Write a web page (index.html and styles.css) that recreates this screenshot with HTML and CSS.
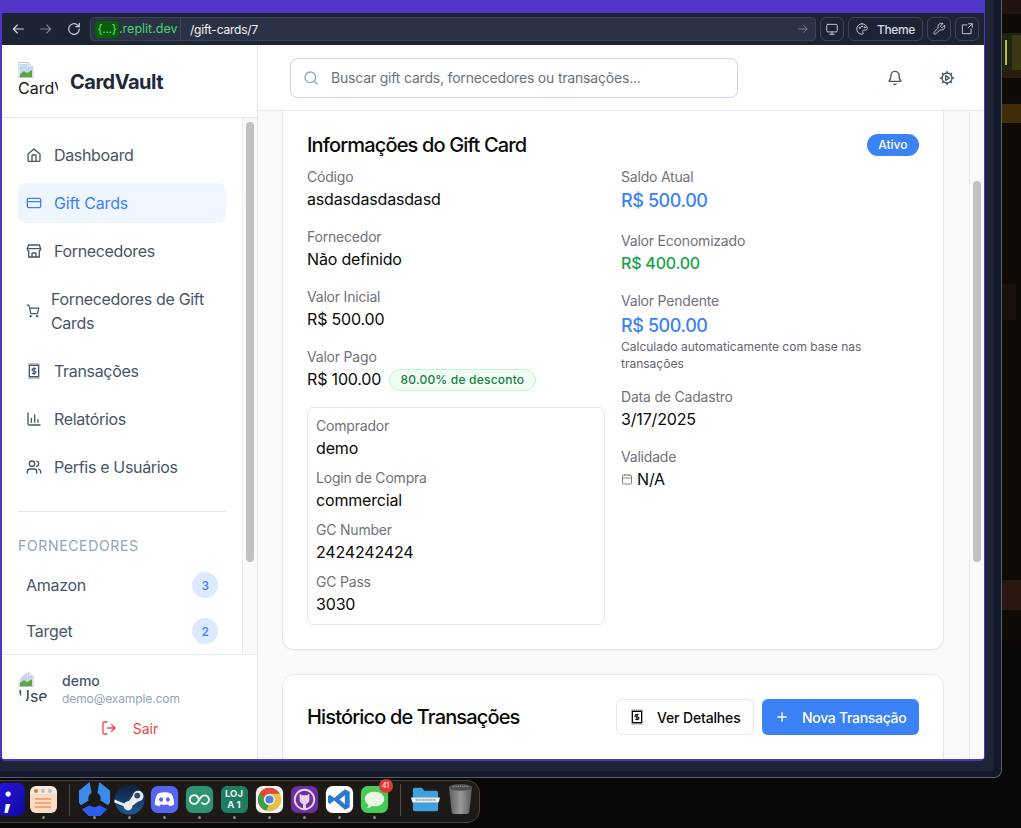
FILE: index.html
```html
<!DOCTYPE html>
<html lang="pt-BR">
<head>
<meta charset="utf-8">
<title>CardVault</title>
<link rel="stylesheet" href="styles.css">
</head>
<body>
<svg class="defs" width="0" height="0" aria-hidden="true">
  <symbol id="i-broken" viewBox="0 0 16 16">
    <path d="M1 .5h9l5 5v10H1z" fill="#fff" stroke="#b9c4d4"/>
    <path d="M10 .5v5h5" fill="#e8ecf4" stroke="#b9c4d4"/>
    <path d="M2 2h7v4h5v2L9 11 6 9 2 12z" fill="#c6d6f5"/>
    <path d="M2 15v-3l4-3 3 2 5-3v7z" fill="#5aa83a"/>
  </symbol>
  <symbol id="i-dollar" viewBox="0 0 24 24">
    <rect x="5" y="3.500" width="14" height="17" fill="none" stroke="currentColor" stroke-width="2"/>
    <path d="M14.500 8.500h-3.700a1.700 1.700 0 0 0 0 3.500h2.400a1.700 1.700 0 0 1 0 3.500H9.500M12 7v10" fill="none" stroke="currentColor" stroke-width="1.700"/>
    <path d="M4 1.500h16M4 22.500h16" stroke="currentColor" stroke-width="1.200" stroke-dasharray="1.500 1.500" fill="none"/>
  </symbol>
</svg>
<div class="desktop">
  <div class="wall"></div>
  <div class="frame">
    <div class="shell">
    <div class="window">
      <div class="toolbar">
        <div class="navs">
          <svg class="ti" viewBox="0 0 24 24"><path d="M20 12H5M11 6l-6 6 6 6"/></svg>
          <svg class="ti dim" viewBox="0 0 24 24"><path d="M4 12h15M13 6l6 6-6 6"/></svg>
          <svg class="ti" viewBox="0 0 24 24"><path d="M20 12a8 8 0 1 1-2.500-5.800L20 8.500M20 3.500v5h-5"/></svg>
        </div>
        <div class="addr">
          <span class="chip">{...}</span><span class="domain">.replit.dev</span>
          <span class="path">/gift-cards/7</span>
          <svg class="ti dim small go" viewBox="0 0 24 24"><path d="M4 12h15M13 6l6 6-6 6"/></svg>
        </div>
        <div class="tbtn"><svg class="ti small" viewBox="0 0 24 24"><rect x="3" y="4" width="18" height="13" rx="2"/><path d="M12 17v4M8 21h8"/></svg></div>
        <div class="tbtn theme"><svg class="ti small" viewBox="0 0 24 24"><path d="M12 3a9 9 0 1 0 0 18c1.500 0 2-1 2-2 0-1.500-1-1.800-1-3s1-2 2-2h3c2 0 3-1.500 3-3 0-4.500-4.500-8-9-8z"/><circle cx="8" cy="10" r="1"/><circle cx="12" cy="7.500" r="1"/><circle cx="16.500" cy="9" r="1"/></svg><span>Theme</span></div>
        <div class="tbtn"><svg class="ti small" viewBox="0 0 24 24"><path d="M14.700 6.300a1 1 0 0 0 0 1.400l1.600 1.600a1 1 0 0 0 1.400 0l3.800-3.800a6 6 0 0 1-7.900 7.900l-6.900 6.900a2.100 2.100 0 0 1-3-3l6.900-6.900a6 6 0 0 1 7.900-7.900z"/></svg></div>
        <div class="tbtn"><svg class="ti small" viewBox="0 0 24 24"><path d="M12 5H4v15h15v-8M14 10l7-7M15 3h6v6"/></svg></div>
      </div>
      <div class="app">
        <aside class="sidebar">
          <div class="brand">
            <div class="logo"><svg class="broken" viewBox="0 0 16 16"><use href="#i-broken"/></svg><span>CardVault</span></div>
            <span class="brand-name">CardVault</span>
          </div>
          <div class="side-scroll">
            <nav class="nav">
              <a class="item"><svg class="ni" viewBox="0 0 24 24"><path d="M3 10.500 12 3l9 7.500V20a1.500 1.500 0 0 1-1.500 1.500h-15A1.500 1.500 0 0 1 3 20z"/><path d="M9 21.500V13a1 1 0 0 1 1-1h4a1 1 0 0 1 1 1v8.500"/></svg><span>Dashboard</span></a>
              <a class="item active"><svg class="ni" viewBox="0 0 24 24"><rect x="2" y="5" width="20" height="14" rx="2"/><path d="M2 10h20"/></svg><span>Gift Cards</span></a>
              <a class="item"><svg class="ni" viewBox="0 0 24 24"><path d="M4 3h16l2 6a3 3 0 0 1-2 2.800V21H4v-9.200A3 3 0 0 1 2 9z"/><path d="M2 8.500h20M9 21v-5a1 1 0 0 1 1-1h4a1 1 0 0 1 1 1v5"/></svg><span>Fornecedores</span></a>
              <a class="item tall"><svg class="ni cart" viewBox="0 0 24 24"><circle cx="8" cy="21" r="1"/><circle cx="19" cy="21" r="1"/><path d="M2 2h3l3 13a2 2 0 0 0 2 1.500h8a2 2 0 0 0 2-1.500l2-8H6"/></svg><span>Fornecedores de Gift Cards</span></a>
              <a class="item"><svg class="ni plain" viewBox="0 0 24 24"><use href="#i-dollar"/></svg><span>Transações</span></a>
              <a class="item"><svg class="ni" viewBox="0 0 24 24"><path d="M3 3v16a2 2 0 0 0 2 2h16M8 17v-6M13 17V6M18 17v-4"/></svg><span>Relatórios</span></a>
              <a class="item"><svg class="ni" viewBox="0 0 24 24"><circle cx="9" cy="7" r="4"/><path d="M2 21v-2a4 4 0 0 1 4-4h6a4 4 0 0 1 4 4v2M16 3.100a4 4 0 0 1 0 7.800M22 21v-2a4 4 0 0 0-3-3.900"/></svg><span>Perfis e Usuários</span></a>
              <hr class="rule">
              <h3 class="section">Fornecedores</h3>
              <a class="vendor"><span>Amazon</span><span class="count">3</span></a>
              <a class="vendor"><span>Target</span><span class="count">2</span></a>
            </nav>
            <div class="track"><div class="thumb side-thumb"></div></div>
          </div>
          <div class="user">
            <div class="user-row">
              <div class="avatar"><svg class="broken" viewBox="0 0 16 16"><use href="#i-broken"/></svg><span>User</span></div>
              <div class="who"><div class="name">demo</div><div class="email">demo@example.com</div></div>
            </div>
            <a class="logout"><svg class="ni" viewBox="0 0 24 24"><path d="M9 3H5a2 2 0 0 0-2 2v14a2 2 0 0 0 2 2h4M10 12h11M16 7l5 5-5 5"/></svg><span>Sair</span></a>
          </div>
        </aside>
        <main class="main">
          <header class="topbar">
            <div class="search"><svg class="si" viewBox="0 0 24 24"><circle cx="11" cy="11" r="8"/><path d="m21 21-4.300-4.300"/></svg><span>Buscar gift cards, fornecedores ou transações...</span></div>
            <div class="actions">
              <svg class="ai" viewBox="0 0 24 24"><path d="M6 8a6 6 0 0 1 12 0c0 7 3 8 3 9H3c0-1 3-2 3-9M10.300 21a2 2 0 0 0 3.400 0"/></svg>
              <svg class="ai" viewBox="0 0 24 24"><circle cx="12" cy="12" r="7.500"/><path d="M10 8.500v7l5.500-3.500z"/><path d="M12 2v2.500M12 19.500V22M2 12h2.500M19.500 12H22M5 5l1.700 1.700M17.300 17.300 19 19M5 19l1.700-1.700M17.300 6.700 19 5"/></svg>
            </div>
          </header>
          <div class="main-scroll">
            <div class="content">
              <section class="card info">
                <div class="card-head">
                  <h2>Informações do Gift Card</h2>
                  <span class="status">Ativo</span>
                </div>
                <div class="cols">
                  <div class="col">
                    <div class="field"><div class="label">Código</div><div class="value">asdasdasdasdasd</div></div>
                    <div class="field"><div class="label">Fornecedor</div><div class="value">Não definido</div></div>
                    <div class="field"><div class="label">Valor Inicial</div><div class="value">R$ 500.00</div></div>
                    <div class="field"><div class="label">Valor Pago</div><div class="value paid">R$ 100.00 <span class="off">80.00% de desconto</span></div></div>
                    <div class="buyer">
                      <div class="bfield"><div class="label">Comprador</div><div class="value">demo</div></div>
                      <div class="bfield"><div class="label">Login de Compra</div><div class="value">commercial</div></div>
                      <div class="bfield"><div class="label">GC Number</div><div class="value">2424242424</div></div>
                      <div class="bfield"><div class="label">GC Pass</div><div class="value">3030</div></div>
                    </div>
                  </div>
                  <div class="col">
                    <div class="field"><div class="label">Saldo Atual</div><div class="money blue">R$ 500.00</div></div>
                    <div class="field"><div class="label">Valor Economizado</div><div class="money green">R$ 400.00</div></div>
                    <div class="field pending-field"><div class="label">Valor Pendente</div><div class="money blue pending">R$ 500.00</div><div class="note">Calculado automaticamente com base nas transações</div></div>
                    <div class="field"><div class="label">Data de Cadastro</div><div class="value">3/17/2025</div></div>
                    <div class="field"><div class="label">Validade</div><div class="value with-icon"><svg class="cal" viewBox="0 0 24 24"><rect x="3" y="4" width="18" height="18" rx="2"/><path d="M8 2v4M16 2v4M3 10h18"/></svg>N/A</div></div>
                  </div>
                </div>
              </section>
              <section class="card history">
                <h2>Histórico de Transações</h2>
                <div class="hbtns">
                  <a class="btn ghost"><svg class="bi" viewBox="0 0 24 24"><use href="#i-dollar"/></svg>Ver Detalhes</a>
                  <a class="btn primary"><svg class="bi" viewBox="0 0 24 24"><path d="M5 12h14M12 5v14" fill="none" stroke="currentColor" stroke-width="2"/></svg>Nova Transação</a>
                </div>
              </section>
            </div>
            <div class="track main-track"><div class="thumb main-thumb"></div></div>
          </div>
        </main>
      </div>
    </div>
    </div>
  </div>
  <div class="dock">
    <div class="semi">;</div>
    <div class="notes"><i></i><b></b><b></b><b></b></div>
    <span class="sep"></span>
    <svg class="app-ic hex" viewBox="0 0 36 36"><path d="M13 0 2 9v12l2 3 8-5c-1-3 0-6 3-8zM23 0l11 9v12l-2 3-8-5c1-3 0-6-3-8z" fill="#3b8beb"/><path d="M5 28l8-4c3 2.500 7 2.500 10 0l8 4-7 7H12z" fill="#2f5df0"/></svg>
    <svg class="app-ic" viewBox="0 0 36 36"><defs><linearGradient id="st" x1="0" y1="0" x2="0" y2="1"><stop offset="0" stop-color="#111d3a"/><stop offset="1" stop-color="#1a5a94"/></linearGradient></defs><circle cx="18" cy="18" r="15.500" fill="url(#st)"/><path d="M2.500 18l10 4c1-1.500 3-2.500 5-2.500l4-6a5.500 5.500 0 1 1 5.500 6.500l-6 4.500a4.500 4.500 0 0 1-9 .5l-9.500-4z" fill="#e8edf2"/><circle cx="26" cy="14" r="3" fill="#2b4a70"/></svg>
    <svg class="app-ic" viewBox="0 0 36 36"><rect x="4" y="4" width="28" height="28" rx="7" fill="#5865f2"/><path d="M11 12c4.500-1.800 9.500-1.800 14 0 2.500 3.500 3 8 3 11-2 1.500-3.500 2-5 2l-1.300-2.200c-2.500.8-5 .8-7.400 0L13 25c-1.500 0-3-.5-5-2 0-3 .5-7.500 3-11z" fill="#fff"/><ellipse cx="14.500" cy="18" rx="2" ry="2.400" fill="#5865f2"/><ellipse cx="21.500" cy="18" rx="2" ry="2.400" fill="#5865f2"/></svg>
    <svg class="app-ic" viewBox="0 0 36 36"><rect x="4" y="4" width="28" height="28" rx="7" fill="#2f9471"/><path d="M17 18a4.500 4.500 0 1 0-1.300 3.200L20 15a4.500 4.500 0 1 1 0 6.300" fill="none" stroke="#fff" stroke-width="1.800"/></svg>
    <div class="loj"><span>LOJ</span><span>A 1</span></div>
    <svg class="app-ic" viewBox="0 0 36 36"><rect x="4" y="4" width="28" height="28" rx="7" fill="#f3f2ef"/><circle cx="18" cy="18" r="12" fill="#e2c044"/><path d="M18 6a12 12 0 0 1 10.400 6H18a6 6 0 0 0-5.500 3.600L7.600 12A12 12 0 0 1 18 6z" fill="#df4a3a"/><path d="M7.600 12l4.900 3.600a6 6 0 0 0 4.500 8.300l-2.300 5.600A12 12 0 0 1 7.600 12z" fill="#3d9e4d"/><circle cx="18" cy="18" r="5.500" fill="#fff"/><circle cx="18" cy="18" r="4.200" fill="#4a82e4"/></svg>
    <svg class="app-ic" viewBox="0 0 36 36"><rect x="4" y="4" width="28" height="28" rx="7" fill="#6f2f9e"/><circle cx="18" cy="18" r="10" fill="none" stroke="#e6d6ef" stroke-width="2"/><path d="M13 12l2.500 1.500h5L23 12v6c0 3.500-2.500 4.500-3.500 4.500v5h-3v-5c-1 0-3.500-1-3.500-4.500z" fill="#e6d6ef"/></svg>
    <svg class="app-ic" viewBox="0 0 36 36"><rect x="4" y="4" width="28" height="28" rx="7" fill="#fff"/><path d="M23.500 7.500l5 2.500v16l-5 2.500-11-9.500-4.500 3.500-1.800-1.500v-6.500L8 13l4.500 3.500zM23.500 13.500l-5.500 4.500 5.500 4.500z" fill="#2a7bd0" fill-rule="evenodd"/></svg>
    <div class="msg"><svg class="app-ic" viewBox="0 0 36 36"><rect x="4" y="4" width="28" height="28" rx="7" fill="#48c95a"/><path d="M18 10c6 0 10 3.300 10 7.500S24 25 18 25c-1 0-2 0-2.800-.3-1.400 1.400-3.200 2.100-5 2.100.9-.9 1.500-2.100 1.600-3.500C9.400 21.800 8 19.800 8 17.500 8 13.300 12 10 18 10z" fill="#e8f6e4"/></svg><span class="bubble">41</span></div>
    <span class="sep sep2"></span>
    <svg class="app-ic" viewBox="0 0 36 36"><path d="M5 8a2 2 0 0 1 2-2h7l3 3h12a2 2 0 0 1 2 2v17a2 2 0 0 1-2 2H7a2 2 0 0 1-2-2z" fill="#3ea0dd"/><path d="M3 16h30l-1.500 5H4.500z" fill="#eceae4"/><path d="M8 18.500h20" stroke="#666" stroke-dasharray="2 1" fill="none"/></svg>
    <svg class="app-ic" viewBox="0 0 36 36"><defs><linearGradient id="tr" x1="0" y1="0" x2="1" y2="0"><stop offset="0" stop-color="#5c5c5c"/><stop offset=".5" stop-color="#9a9a9a"/><stop offset="1" stop-color="#565656"/></linearGradient></defs><path d="M6 5h24l-3 26a3 3 0 0 1-3 2H12a3 3 0 0 1-3-2z" fill="url(#tr)"/><ellipse cx="18" cy="5.500" rx="12" ry="3.500" fill="#4d4d4d"/><path d="M10 5l3-1 2 1 3-1 3 1 2-1 3 1" stroke="#bbb" stroke-dasharray="1 1" fill="none"/></svg>
    <div class="dots"><i></i><i></i><i></i><i></i><i></i><i></i><i></i><i></i><i></i><i></i></div>
  </div>
</div>
</body>
</html>
```

FILE: styles.css
```css
* { box-sizing: border-box; }
html, body { margin: 0; height: 100%; overflow: hidden; }
body { font-family: Inter, "Noto Sans", sans-serif; color: #0a0a0a; background: #0a0807; }
.defs { position: absolute; }
.desktop { position: relative; width: 1021px; height: 828px; overflow: hidden; background: #0a0807; }
.wall {
  position: absolute; left: 1002px; top: 0; width: 19px; height: 640px;
  background:
    linear-gradient(#b4bd3e, #b4bd3e) 3px 40px / 2px 25px no-repeat,
    linear-gradient(#3a3713, #3a3713) 10px 35px / 9px 35px no-repeat,
    linear-gradient(#1e2410, #1e2410) 0 33px / 19px 37px no-repeat,
    linear-gradient(#2a1d0a, #2a1d0a) 0 70px / 19px 8px no-repeat,
    linear-gradient(#402c09, #402c09) 0 104px / 19px 19px no-repeat,
    linear-gradient(#201310, #201310) 0 0 / 19px 14px no-repeat,
    linear-gradient(#1a110c, #1a110c) 0 284px / 14px 36px no-repeat,
    linear-gradient(#2a1810, #2a1810) 0 580px / 19px 30px no-repeat,
    #0e0b06;
}
.frame { position: relative; width: 1002px; height: 778px; background: #121a2c; border-right: 1px solid #5a5d68; border-bottom: 1px solid #5a5d68; border-bottom-right-radius: 8px; }
.shell { width: 994px; height: 771px; background: #1c2436; }
.window { width: 985px; height: 761px; background: #4f35c8; padding: 13px 1px 2px 2px; border-bottom-right-radius: 5px; border-bottom-left-radius: 5px; display: flex; flex-direction: column; }
.toolbar { height: 32px; background: #1c2333; display: flex; align-items: center; gap: 4px; padding-right: 4px; flex: none; }
.navs { display: flex; width: 84px; padding-left: 8px; gap: 12px; align-items: center; flex: none; }
.ti { width: 16px; height: 16px; fill: none; stroke: #d4d8e2; stroke-width: 1.700; stroke-linecap: round; stroke-linejoin: round; flex: none; }
.ti.dim { stroke: #7b8296; }
.ti.small { width: 14px; height: 14px; stroke-width: 1.500; }
.addr { width: 726px; height: 24px; background: #2b3245; border: 1px solid #3c445c; border-radius: 4px; display: flex; align-items: center; font-size: 13px; padding-left: 4px; flex: none; }
.chip { background: #0b5c0b; color: #5fe07a; border-radius: 4px; height: 17px; width: 24px; line-height: 16px; text-align: center; font-size: 12px; letter-spacing: -.3px; }
.domain { color: #4fd06e; font-size: 12.500px; width: 62px; height: 22px; line-height: 22px; border-right: 1px solid #3c445c; }
.path { color: #f4f5f8; margin-left: 9px; font-size: 12px; letter-spacing: -.2px; }
.go { margin-left: auto; margin-right: 5px; }
.tbtn { height: 24px; width: 24px; border: 1px solid #3c445c; border-radius: 6px; display: flex; align-items: center; justify-content: center; color: #d4d8e2; font-size: 12px; font-weight: 500; flex: none; letter-spacing: -.4px; padding-right: 1px; }
.tbtn.theme { width: 75px; gap: 8px; }
.app { flex: 1; display: flex; min-height: 0; background: #fff; border-bottom-left-radius: 3px; border-bottom-right-radius: 3px; overflow: hidden; }
.sidebar { width: 256px; flex: none; border-right: 1px solid #e2e8f0; display: flex; flex-direction: column; background: #fff; }
.brand { height: 73px; flex: none; border-bottom: 1px solid #e2e8f0; display: flex; align-items: center; padding-left: 16px; gap: 12px; }
.logo { width: 40px; height: 40px; overflow: hidden; flex: none; font-size: 16px; line-height: 20px; color: #1a1a1a; white-space: nowrap; margin-top: 2px; }
.broken { display: block; width: 16px; height: 16px; }
.brand-name { font-size: 20px; font-weight: 700; color: #1e293b; letter-spacing: -.5px; margin-top: 2px; }
.side-scroll { flex: 1; min-height: 0; display: flex; }
.nav { flex: 1; min-width: 0; padding: 17px 16px 0; overflow: hidden; display: flex; flex-direction: column; gap: 8px; }
.item { display: flex; align-items: center; height: 40px; padding: 0 8px; gap: 12px; border-radius: 8px; color: #475569; font-size: 16px; flex: none; line-height: 24px; letter-spacing: -.33px; }
.item.tall { height: 64px; }
.item.active { background: #eff6ff; color: #3b82f6; letter-spacing: -.15px; }
.ni { width: 16px; height: 16px; fill: none; stroke: currentColor; stroke-width: 2; stroke-linecap: round; stroke-linejoin: round; flex: none; }
.ni.plain { stroke: none; }
.ni.cart { width: 14px; height: 14px; margin-right: -1px; }
.rule { border: 0; border-top: 1px solid #e2e8f0; margin: 16px 0 0; width: 100%; flex: none; }
.section { margin: 16px 0 2px; font-size: 14px; line-height: 20px; font-weight: 400; text-transform: uppercase; letter-spacing: .65px; color: #94a3b8; flex: none; }
.vendor { display: flex; justify-content: space-between; align-items: center; height: 38px; padding: 0 8px; color: #475569; font-size: 16px; flex: none; letter-spacing: -.3px; }
.count { width: 26px; height: 26px; border-radius: 50%; background: #dbeafe; color: #3b82f6; font-size: 12px; font-weight: 500; display: flex; align-items: center; justify-content: center; }
.track { width: 15px; flex: none; background: #fafafa; border-left: 1px solid #ececec; padding: 0 3px; }
.thumb { width: 8px; border-radius: 4px; background: #c1c1c1; }
.side-thumb { margin-top: 4px; height: 440px; }
.user { height: 105px; flex: none; border-top: 1px solid #e2e8f0; padding: 16px; display: flex; flex-direction: column; background: #fff; }
.user-row { display: flex; gap: 12px; }
.avatar { width: 32px; height: 32px; border-radius: 50%; overflow: hidden; flex: none; font-size: 16px; line-height: 19px; color: #334155; white-space: nowrap; }
.who { margin-top: 0; }
.name { font-size: 14px; line-height: 20px; font-weight: 450; color: #475569; }
.email { font-size: 12px; line-height: 16px; color: #94a3b8; letter-spacing: -.1px; }
.logout { display: flex; align-items: center; justify-content: center; gap: 16px; color: #ef4444; font-size: 14px; margin-top: 9px; height: 24px; }
.main { flex: 1; min-width: 0; display: flex; flex-direction: column; background: #f9fafb; }
.topbar { height: 66px; flex: none; background: #fff; border-bottom: 1px solid #e2e8f0; display: flex; align-items: center; padding: 0 29px 0 32px; }
.search { width: 448px; height: 40px; border: 1px solid #cbd5e1; border-radius: 8px; display: flex; align-items: center; padding-left: 12px; gap: 12px; font-size: 14px; color: #6b7280; background: #fff; letter-spacing: -.19px; }
.si { width: 16px; height: 16px; fill: none; stroke: #94a3b8; stroke-width: 2; stroke-linecap: round; flex: none; }
.actions { margin-left: auto; display: flex; gap: 36px; }
.ai { width: 16px; height: 16px; fill: none; stroke: #475569; stroke-width: 2; stroke-linecap: round; stroke-linejoin: round; }
.main-scroll { flex: 1; min-height: 0; display: flex; }
.content { flex: 1; min-width: 0; padding: 0 25px 0 24px; overflow: hidden; display: flex; flex-direction: column; gap: 24px; }
.card { background: #fff; border: 1px solid #e5e7eb; border-radius: 12px; flex: none; }
.info { height: 539px; border-top: 0; border-top-left-radius: 0; border-top-right-radius: 0; padding: 22px 24px 0; box-shadow: 0 1px 2px rgba(0,0,0,.04); }
.card-head { display: flex; justify-content: space-between; align-items: center; height: 24px; }
h2 { margin: 0; font-size: 20px; font-weight: 550; letter-spacing: -.85px; line-height: 24px; color: #0a0a0a; }
.status { height: 22px; padding: 0 11.500px; border-radius: 11px; background: #3b82f6; color: #fff; font-size: 12px; font-weight: 500; line-height: 22px; margin-top: 0; }
.cols { display: grid; grid-template-columns: 298px 298px; gap: 16px; margin-top: 10px; }
.field { margin-bottom: 16px; }
.pending-field { margin-bottom: 15px; }
.label { font-size: 14px; line-height: 20px; color: #71717a; letter-spacing: -.2px; }
.value { font-size: 16px; line-height: 24px; color: #0a0a0a; letter-spacing: -.17px; }
.off { display: inline-block; margin-left: 3px; height: 22px; line-height: 20px; padding: 0 11px; border: 1px solid #bbf7d0; border-radius: 11px; background: #f0fdf4; color: #15803d; font-size: 12px; font-weight: 500; vertical-align: 1px; letter-spacing: .2px; }
.buyer { border: 1px solid #e5e7eb; border-radius: 6px; padding: 8px; height: 218px; }
.bfield { margin-bottom: 8px; }
.money { font-size: 18px; line-height: 28px; font-weight: 450; letter-spacing: -.4px; }
.blue { color: #3b82f6; }
.green { color: #16a34a; font-size: 16px; line-height: 24px; letter-spacing: -.2px; }
.pending { margin-top: 1px; }
.note { font-size: 12px; line-height: 17px; color: #64646c; margin-top: -2px; }
.with-icon { display: flex; align-items: center; gap: 4px; }
.cal { width: 12px; height: 12px; fill: none; stroke: #71717a; stroke-width: 1.700; }
.history { height: 200px; padding: 24px; display: flex; justify-content: space-between; align-items: flex-start; }
.history h2 { margin-top: 6px; }
.hbtns { display: flex; gap: 8px; }
.btn { height: 36px; border-radius: 6px; display: flex; align-items: center; gap: 12px; font-size: 14px; font-weight: 500; padding: 0 12px; white-space: nowrap; letter-spacing: -.15px; }
.ghost { border: 1px solid #e5e7eb; background: #fff; color: #0a0a0a; width: 138px; }
.primary { background: #3b82f6; color: #fff; width: 157px; letter-spacing: -.3px; }
.bi { width: 16px; height: 16px; flex: none; }
.main-track { padding-top: 70px; }
.main-thumb { height: 381px; }
.dock { position: absolute; left: -30px; top: 780px; width: 510px; height: 43px; background: #1d1916; border: 1px solid #45423f; border-radius: 13px; display: flex; align-items: center; padding-left: 26px; }
.app-ic { width: 35px; height: 35px; flex: none; display: block; margin-top: -5px; }
.hex { margin-left: 6.500px; }
.semi { width: 28px; height: 33px; padding-right: 6px; margin-top: -5px; flex: none; background: linear-gradient(135deg, #2616e0, #10089a); border-radius: 7px; color: #fff; font-size: 30px; font-weight: 700; line-height: 27px; text-align: center; }
.notes { width: 27px; height: 27px; margin: -5px 0 0 5px; flex: none; border-radius: 6px; background: linear-gradient(#f2ebe3 28%, #fadcc4 28%); position: relative; }
.notes i { position: absolute; left: 4px; top: 3px; width: 4px; height: 4px; border-radius: 50%; background: #dd7a2a; box-shadow: 7px 0 0 #c4bdb5, 14px 0 0 #c4bdb5; }
.notes b { display: block; width: 16px; height: 2px; background: #f1a77c; position: relative; top: 12px; left: 5px; margin-bottom: 2px; }
.sep { width: 1px; height: 32px; background: #55504b; margin: -3px 0 0 12px; flex: none; }
.sep2 { margin-left: 8.500px; margin-right: 6.500px; }
.loj { width: 27px; height: 27px; margin: -5px 4px 0; border-radius: 6px; background: #1d7c61; color: #e8f5ef; font-size: 9.500px; font-weight: 700; line-height: 11px; display: flex; flex-direction: column; align-items: center; justify-content: center; flex: none; }
.msg { position: relative; width: 35px; height: 35px; margin-top: -5px; flex: none; }
.msg .app-ic { margin: 0; }
.bubble { position: absolute; right: -1px; top: -3px; width: 14px; height: 14px; border-radius: 50%; background: #e03a32; color: #fff; font-size: 7px; line-height: 14px; text-align: center; }
.dots { position: absolute; left: 0; right: 0; bottom: 2px; height: 4px; }
.dots i { position: absolute; top: 0; width: 3px; height: 3px; border-radius: 50%; background: #8b8b88; }
.dots i:nth-child(1) { left: 71px; }
.dots i:nth-child(2) { left: 122px; }
.dots i:nth-child(3) { left: 157px; }
.dots i:nth-child(4) { left: 192px; }
.dots i:nth-child(5) { left: 227px; }
.dots i:nth-child(6) { left: 262px; }
.dots i:nth-child(7) { left: 297px; }
.dots i:nth-child(8) { left: 332px; }
.dots i:nth-child(9) { left: 367px; }
.dots i:nth-child(10) { left: 402px; }
```
